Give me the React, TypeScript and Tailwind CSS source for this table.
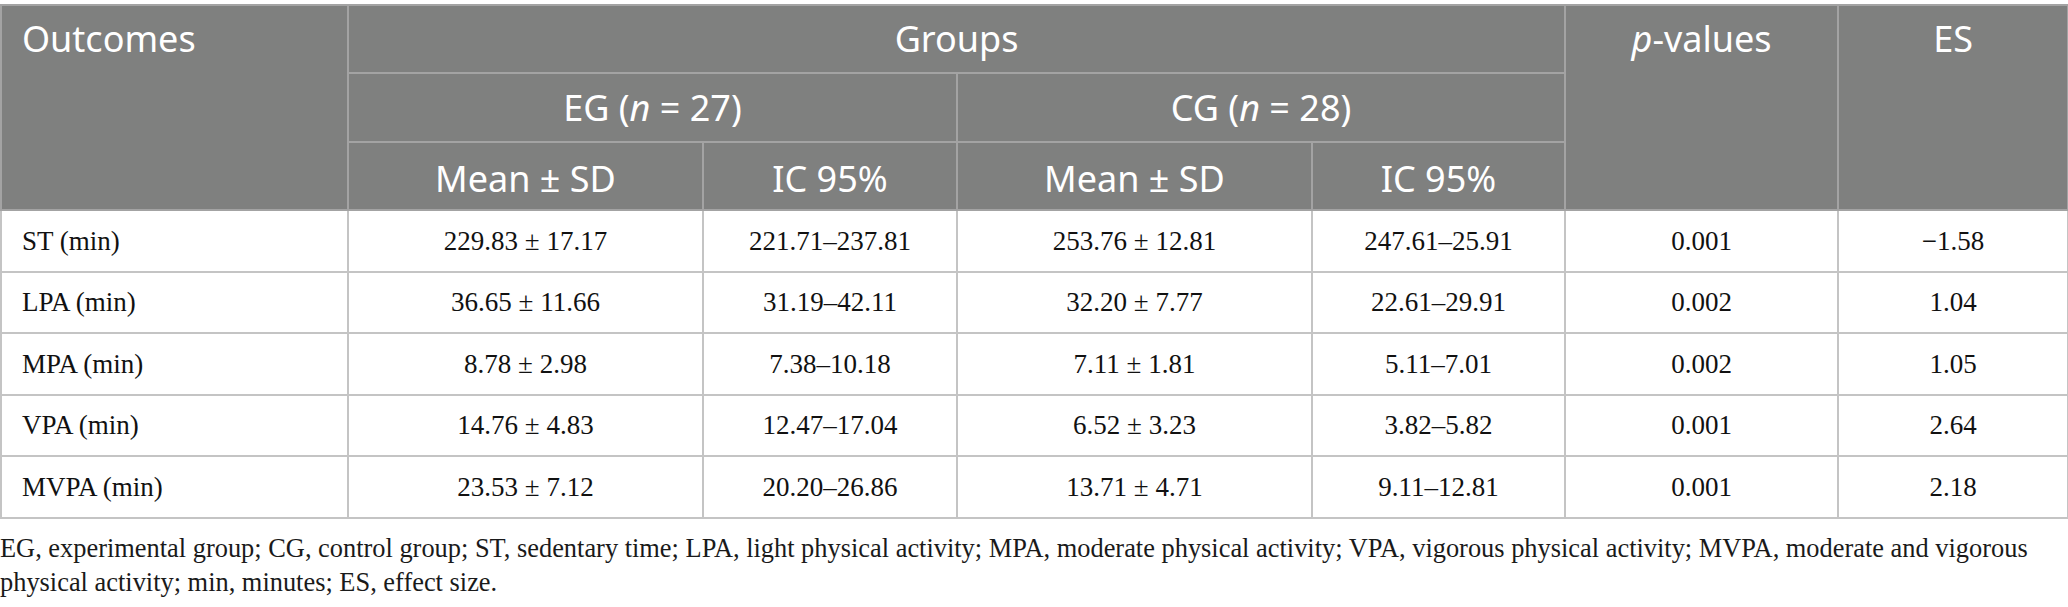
import React from 'react';

type Row = {
  outcome: string;
  egMean: string;
  egCi: string;
  cgMean: string;
  cgCi: string;
  p: string;
  es: string;
};

const rows: Row[] = [
  { outcome: 'ST (min)', egMean: '229.83 ± 17.17', egCi: '221.71–237.81', cgMean: '253.76 ± 12.81', cgCi: '247.61–25.91', p: '0.001', es: '−1.58' },
  { outcome: 'LPA (min)', egMean: '36.65 ± 11.66', egCi: '31.19–42.11', cgMean: '32.20 ± 7.77', cgCi: '22.61–29.91', p: '0.002', es: '1.04' },
  { outcome: 'MPA (min)', egMean: '8.78 ± 2.98', egCi: '7.38–10.18', cgMean: '7.11 ± 1.81', cgCi: '5.11–7.01', p: '0.002', es: '1.05' },
  { outcome: 'VPA (min)', egMean: '14.76 ± 4.83', egCi: '12.47–17.04', cgMean: '6.52 ± 3.23', cgCi: '3.82–5.82', p: '0.001', es: '2.64' },
  { outcome: 'MVPA (min)', egMean: '23.53 ± 7.12', egCi: '20.20–26.86', cgMean: '13.71 ± 4.71', cgCi: '9.11–12.81', p: '0.001', es: '2.18' },
];

// header cells share the same look
const th = 'border-2 border-[#a3a3a3] bg-[#7f807f] text-white font-normal text-[36px] leading-[48px]';
const td = 'border-2 border-[#c4c4c4] text-center';

export default function App() {
  return (
    <div className="bg-white w-[2068px] pt-[4px]">
      <table
        className="table-fixed border-collapse w-[2067px]"
        style={{ fontFamily: '"Noto Sans", "Open Sans", sans-serif' }}
      >
        <colgroup>
          <col className="w-[347px]" />
          <col className="w-[355px]" />
          <col className="w-[254px]" />
          <col className="w-[355px]" />
          <col className="w-[253px]" />
          <col className="w-[273px]" />
          <col className="w-[230px]" />
        </colgroup>
        <thead>
          <tr className="h-[68px]">
            <th rowSpan={3} className={`${th} text-left align-top pl-[20px] pt-[9px]`}>
              Outcomes
            </th>
            <th colSpan={4} className={`${th} text-center`}>
              Groups
            </th>
            <th rowSpan={3} className={`${th} text-center align-top pt-[9px]`}>
              <i>p</i>-values
            </th>
            <th rowSpan={3} className={`${th} text-center align-top pt-[9px]`}>
              ES
            </th>
          </tr>
          <tr className="h-[69px]">
            <th colSpan={2} className={`${th} text-center`}>
              EG (<i>n</i> = 27)
            </th>
            <th colSpan={2} className={`${th} text-center`}>
              CG (<i>n</i> = 28)
            </th>
          </tr>
          <tr className="h-[68px]">
            <th className={`${th} text-center pt-[6px]`}>Mean ± SD</th>
            <th className={`${th} text-center pt-[6px]`}>IC 95%</th>
            <th className={`${th} text-center pt-[6px]`}>Mean ± SD</th>
            <th className={`${th} text-center pt-[6px]`}>IC 95%</th>
          </tr>
        </thead>
        <tbody
          className="text-[27px] text-[#111]"
          style={{ fontFamily: '"Liberation Serif", serif' }}
        >
          {rows.map((r) => (
            <tr key={r.outcome} className="h-[61.6px]">
              <td className={`${td} !text-left pl-[20px]`}>{r.outcome}</td>
              <td className={td}>{r.egMean}</td>
              <td className={td}>{r.egCi}</td>
              <td className={td}>{r.cgMean}</td>
              <td className={td}>{r.cgCi}</td>
              <td className={td}>{r.p}</td>
              <td className={td}>{r.es}</td>
            </tr>
          ))}
        </tbody>
      </table>

      <p
        className="mt-[12px] text-[26.4px] leading-[34px] text-[#1a1a1a]"
        style={{ fontFamily: '"Liberation Serif", serif' }}
      >
        EG, experimental group; CG, control group; ST, sedentary time; LPA, light physical activity; MPA, moderate
        physical activity; VPA, vigorous physical activity; MVPA, moderate and vigorous physical activity; min,
        minutes; ES, effect size.
      </p>
    </div>
  );
}
